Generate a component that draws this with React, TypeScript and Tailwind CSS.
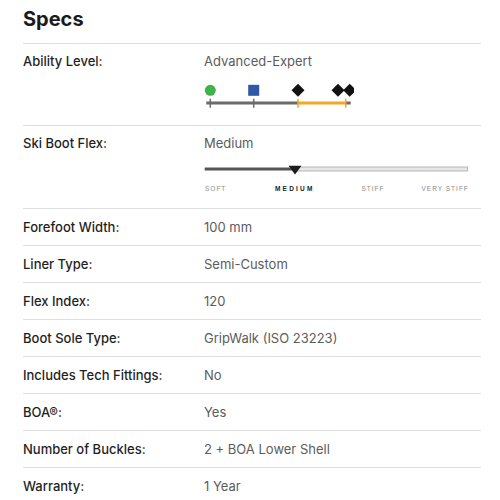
import React from "react";

const rows: [string, string][] = [
  ["Forefoot Width:", "100 mm"],
  ["Liner Type:", "Semi-Custom"],
  ["Flex Index:", "120"],
  ["Boot Sole Type:", "GripWalk (ISO 23223)"],
  ["Includes Tech Fittings:", "No"],
  ["BOA®:", "Yes"],
  ["Number of Buckles:", "2 + BOA Lower Shell"],
  ["Warranty:", "1 Year"],
];

function AbilityChart() {
  const dia = (cx: number, cy: number, r: number) =>
    `${cx},${cy - r} ${cx + r},${cy} ${cx},${cy + r} ${cx - r},${cy}`;
  return (
    <svg width="150" height="46" viewBox="0 0 150 46" className="block">
      <circle cx="6.3" cy="19.3" r="5.5" fill="#3fb34a" />
      <rect x="44.2" y="13.8" width="11" height="11" fill="#2f59a6" />
      <polygon points={dia(94, 19.3, 6.5)} fill="#111" />
      <polygon points={dia(134, 19.3, 6.5)} fill="#111" />
      <polygon points={dia(145.7, 19.3, 6.5)} fill="#111" />
      <line x1="2.3" y1="32" x2="94" y2="32" stroke="#6b6b6b" strokeWidth="3" />
      <line x1="94" y1="32" x2="141.7" y2="32" stroke="#f5a623" strokeWidth="3" />
      <line x1="141.7" y1="32" x2="146.7" y2="32" stroke="#6b6b6b" strokeWidth="3" />
      <line x1="6.3" y1="27.7" x2="6.3" y2="36.7" stroke="#6b6b6b" strokeWidth="1.5" />
      <line x1="49.7" y1="27.7" x2="49.7" y2="36.7" stroke="#6b6b6b" strokeWidth="1.5" />
      <line x1="94" y1="27.7" x2="94" y2="36.7" stroke="#f5a623" strokeWidth="1.5" />
      <line x1="141.7" y1="27.7" x2="141.7" y2="36.7" stroke="#f5a623" strokeWidth="1.5" />
    </svg>
  );
}

function FlexSlider() {
  return (
    <div>
      <svg width="266" height="24" viewBox="0 0 266 24" className="block">
        <rect x="90" y="14" width="173.5" height="4" fill="#e6e6e6" stroke="#a8a8a8" strokeWidth="0.8" />
        <line x1="0.7" y1="16" x2="91" y2="16" stroke="#555" strokeWidth="3" />
        <polygon points="84.5,12.7 97.5,12.7 91,21.5" fill="#1c1c1c" />
      </svg>
      <div
        className="mt-[7px] flex h-[10px] items-center whitespace-nowrap text-[6.5px] leading-[10px] tracking-[1px] text-[#8a8a8a]"
        style={{ fontFamily: '"Liberation Sans", Arial, sans-serif' }}
      >
        <span className="w-[71px] pl-[1px]">SOFT</span>
        <span className="w-[86.5px] font-bold tracking-[2.2px] text-[#222]">MEDIUM</span>
        <span className="w-[60px]">STIFF</span>
        <span>VERY STIFF</span>
      </div>
    </div>
  );
}

export default function App() {
  return (
    <div
      className="w-[500px] h-[500px] overflow-hidden bg-white pl-[23px] pr-[19px]"
      style={{ fontFamily: '"Inter", "Open Sans", sans-serif' }}
    >
      <div className="h-[44px] border-b border-[#dedede]">
        <h1 className="pt-[5px] text-[20px] font-bold leading-[28px] text-[#1a1a1a]">Specs</h1>
      </div>
      <div className="flex border-b border-[#dedede] pt-[7px] pb-[8px]">
        <div className="w-[181px] text-[13px] font-medium leading-[20px] text-[#1f1f1f]">Ability Level:</div>
        <div>
          <div className="text-[13px] leading-[20px] text-[#5c5c5c]">Advanced-Expert</div>
          <AbilityChart />
        </div>
      </div>
      <div className="flex border-b border-[#dedede] pt-[7px] pb-[14px]">
        <div className="w-[181px] text-[13px] font-medium leading-[20px] text-[#1f1f1f]">Ski Boot Flex:</div>
        <div>
          <div className="text-[13px] leading-[20px] text-[#5c5c5c]">Medium</div>
          <FlexSlider />
        </div>
      </div>
      {rows.map(([k, v]) => (
        <div key={k} className="flex border-b border-[#dedede] py-[8px]">
          <div className="w-[181px] text-[13px] font-medium leading-[20px] text-[#1f1f1f]">{k}</div>
          <div className="text-[13px] leading-[20px] text-[#5c5c5c]">{v}</div>
        </div>
      ))}
    </div>
  );
}
